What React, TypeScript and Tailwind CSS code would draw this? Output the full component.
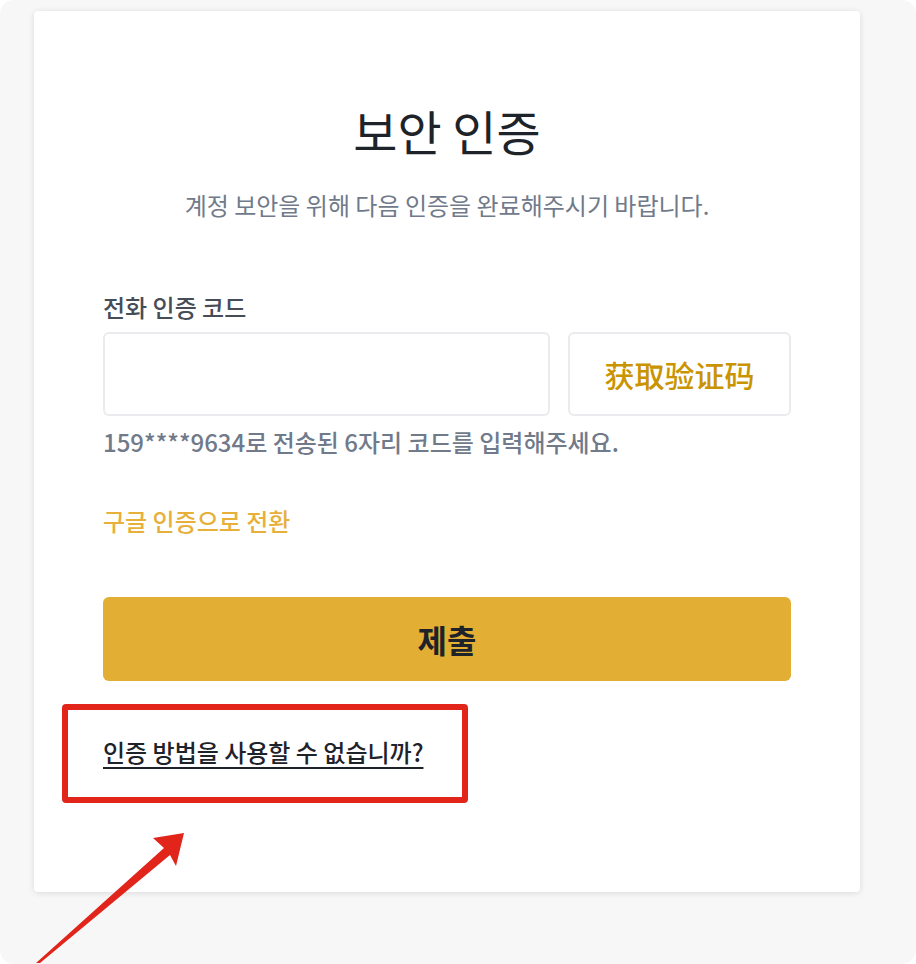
import React from 'react';

const font = { fontFamily: '"Noto Sans CJK KR", "Noto Sans CJK SC", sans-serif' };

const Annotation: React.FC = () => (
  <svg className="absolute inset-0 pointer-events-none" width="916" height="964" viewBox="0 0 916 964">
    <rect x="65" y="707" width="400" height="93" fill="none" stroke="#e1251b" strokeWidth="6" rx="1" />
    <polygon
      points="184,833 153,838 164,848 36,963 40,963 170,855 176,866"
      fill="#e1251b"
    />
  </svg>
);

export default function App() {
  return (
    <div className="bg-white w-[916px] h-[964px] relative overflow-hidden" style={font}>
      <div className="w-full h-full rounded-[14px] bg-[#f7f7f7] pt-[11px] pl-[34px]">
        <div className="w-[826px] h-[881px] bg-white rounded-[4px] shadow-[0_1px_6px_rgba(0,0,0,0.12)] px-[69px] pt-[89px]">
          <h1 className="text-center text-[48px] leading-[60px] text-[#1e2329] font-normal">보안 인증</h1>
          <p className="text-center text-[24px] leading-[32px] text-[#707a8a] mt-[29px]">
            계정 보안을 위해 다음 인증을 완료해주시기 바랍니다.
          </p>

          <div className="mt-[70px] text-[24px] leading-[32px] text-[#474d57] font-medium">전화 인증 코드</div>
          <div className="flex gap-[18px] mt-[9px]">
            <input className="flex-1 h-[84px] border-2 border-[#e9ebee] rounded-[6px] outline-none px-4 text-[24px]" />
            <button className="w-[223px] h-[84px] border-2 border-[#e9ebee] rounded-[6px] text-[30px] text-[#c99400] font-medium">
              获取验证码
            </button>
          </div>
          <p className="mt-[10px] text-[24px] leading-[32px] text-[#707a8a] font-medium">
            159****9634로 전송된 6자리 코드를 입력해주세요.
          </p>

          <div className="mt-[47px] text-[24px] leading-[32px] text-[#e6b03a] font-medium">구글 인증으로 전환</div>

          <button className="mt-[60px] w-full h-[84px] rounded-[6px] bg-[#e2ae33] text-[32px] font-bold text-[#1e2329]">
            제출
          </button>

          <div className="mt-[55px] leading-[32px]">
            <a className="text-[24px] leading-[32px] text-[#1e2329] underline underline-offset-[5px] decoration-[2px] font-medium">
              인증 방법을 사용할 수 없습니까?
            </a>
          </div>
        </div>
      </div>
      <Annotation />
    </div>
  );
}
